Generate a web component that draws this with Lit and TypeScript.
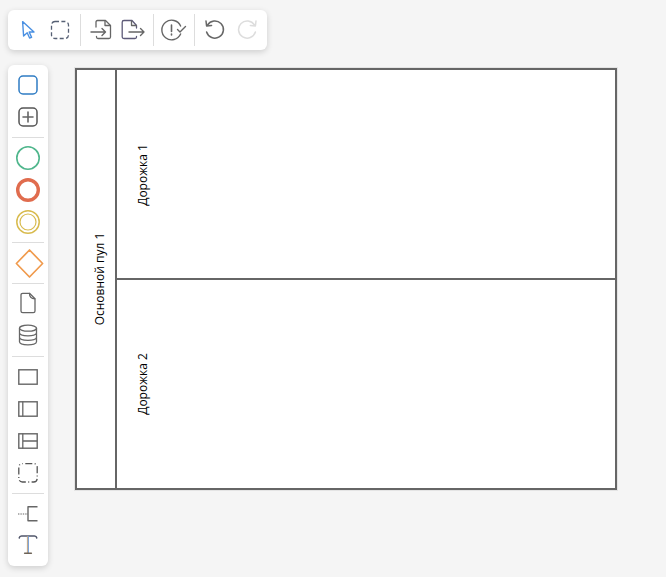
import { LitElement, html, css, svg, nothing } from "lit";
import { customElement } from "lit/decorators.js";

const G = "#666";
const icon = (c: unknown) => html`<div class="btn"><svg width="32" height="32" viewBox="0 0 32 32" fill="none" stroke="${G}" stroke-width="1.3" stroke-linecap="round" stroke-linejoin="round">${c}</svg></div>`;

const top1 = [
  svg`<path d="M10.6 7.6 L22 18 L17.2 18 L19.6 23.4 L17.6 24 L15.2 18.8 L11.6 22 Z" stroke="#4a90e2" stroke-width="1.4"/>`,
  svg`<rect x="7.5" y="7.5" width="17" height="17" rx="3.5" stroke="#566074" stroke-width="1.3" stroke-dasharray="4 2.4" stroke-linecap="butt"/>`,
];
const top2 = [
  svg`<path d="M11 13 V8 Q11 6.5 12.5 6.5 H20.5 L25.5 11.5 V23 Q25.5 24.5 24 24.5 H13 Q11.5 24.5 11.5 23 V22.5"/><path d="M20 6.8 V11.5 H25.2"/><path d="M6 18 H20.5 M17 14.5 L20.5 18 L17 21.5" stroke-width="1.4"/>`,
  svg`<path d="M19.5 14 V11.5 L15 6.5 H7 Q5.2 6.5 5.2 8.2 V23 Q5.2 24.5 7 24.5 H18 Q19.5 24.5 19.5 23 V22.5" stroke="#5d5a78"/><path d="M14.5 6.8 V11.5 H19.4"/><path d="M12 18 H27 M23.5 14.5 L27 18 L23.5 21.5" stroke-width="1.4"/>`,
];
const top3 = [
  svg`<path d="M22.6 12 A9.8 9.8 0 1 0 22.6 20" stroke-width="1.4"/><path d="M13.5 11 V17.5 M13.5 20 V21" stroke-width="1.6"/><path d="M19.5 15.5 L22 18 L27.5 12.5" stroke-width="1.4"/>`,
];
const top4 = [
  svg`<path d="M8.5 11 A8.6 8.6 0 1 1 7.6 18" stroke-width="1.5"/><path d="M7 7 L7.6 12 L12.6 11.4" stroke-width="1.5"/>`,
  svg`<path d="M23.5 11 A8.6 8.6 0 1 0 24.4 18" stroke="#ddd" stroke-width="1.5"/><path d="M25 7 L24.4 12 L19.4 11.4" stroke="#ddd" stroke-width="1.5"/>`,
];

const p1 = [
  svg`<rect x="7" y="7" width="18" height="18" rx="4" stroke="#2f7cc4" stroke-width="1.5"/>`,
  svg`<rect x="7" y="7" width="18" height="18" rx="4" stroke="#555" stroke-width="1.5"/><path d="M16 11 V21 M11 16 H21" stroke-width="1.6"/>`,
];
const p2 = [
  svg`<circle cx="16" cy="16" r="11.2" stroke="#4fb68c" stroke-width="1.6"/>`,
  svg`<circle cx="16" cy="16" r="10.3" stroke="#e06c4e" stroke-width="3.4"/>`,
  svg`<circle cx="16" cy="16" r="11.2" stroke="#d8bb4e" stroke-width="1.5"/><circle cx="16" cy="16" r="8" stroke="#d8bb4e" stroke-width="1.2"/>`,
];
const p3 = [
  svg`<path d="M17.5 3 L30.6 16.5 L17.5 30 L4.4 16.5 Z" stroke="#f09a4c" stroke-width="1.7"/>`,
];
const p4 = [
  svg`<path d="M9 7 Q9 5.3 10.7 5.3 H17.5 L23 10.8 V23 Q23 24.7 21.3 24.7 H10.7 Q9 24.7 9 23 Z"/><path d="M17.5 5.5 Q17.5 10.6 22.8 10.8" />`,
  svg`<ellipse cx="16" cy="8.2" rx="8.5" ry="3"/><path d="M7.5 8.2 V21.8 C7.5 25.8 24.5 25.8 24.5 21.8 V8.2 M7.5 12.8 C7.5 16.8 24.5 16.8 24.5 12.8 M7.5 17.3 C7.5 21.3 24.5 21.3 24.5 17.3"/>`,
];
const p5 = [
  svg`<rect x="6.8" y="8.8" width="18.4" height="14.4" stroke-width="1.4" stroke-linejoin="miter"/>`,
  svg`<rect x="6.8" y="8.8" width="18.4" height="14.4" stroke-width="1.4" stroke-linejoin="miter"/><path d="M10.8 9 V23"/>`,
  svg`<rect x="6.8" y="8.8" width="18.4" height="14.4" stroke-width="1.4" stroke-linejoin="miter"/><path d="M10.8 9 V23 M10.8 16 H25"/>`,
  svg`<rect x="6.8" y="6.6" width="18.4" height="18.4" rx="3.5" stroke="#555" stroke-width="1.3" stroke-dasharray="7 2.4 1 2.4" stroke-dashoffset="-3" stroke-linecap="butt"/>`,
];
const p6 = [
  svg`<path d="M25.5 8.8 H16 V22.8 H25.5" stroke-width="1.4" stroke-linecap="butt"/><path d="M6 16 H16" stroke-width="1.2" stroke-dasharray="1.4 1" stroke-linecap="butt"/>`,
  svg`<path d="M7.2 8 Q7.6 5.9 9.5 5.9 H22.5 Q24.4 5.9 24.8 8" stroke="#50566a" stroke-width="1.5"/><path d="M15.4 6 V23.2" stroke="#c7a57c" stroke-width="1" stroke-linecap="butt"/><path d="M16.4 6 V23.2" stroke="#6d9ad6" stroke-width="1" stroke-linecap="butt"/><path d="M12.6 23.3 H19.4" stroke="#6d6256" stroke-width="1.4"/>`,
];

const groups = (gs: unknown[][]) =>
  gs.map((g, i) => html`${i ? html`<div class="sep"></div>` : nothing}${g.map(icon)}`);

const labels = [
  { t: "Основной пул 1", x: 26, y: 212 },
  { t: "Дорожка 1", x: 69, y: 107.5 },
  { t: "Дорожка 2", x: 69, y: 316.5 },
];

@customElement("app-root")
export class AppRoot extends LitElement {
  static styles = css`
    :host { display: block; width: 666px; height: 577px; background: #f5f5f5; overflow: hidden; box-sizing: border-box; padding: 10px 8px 0; font-family: "Open Sans", sans-serif; }
    .bar { display: inline-flex; background: #fff; border-radius: 6px; box-shadow: 0 2px 6px rgba(0,0,0,.16); padding: 4px; }
    .top { vertical-align: top; }
    .top .sep { width: 1px; margin: 0 4px; background: #ddd; }
    .row { display: flex; margin-top: 15px; align-items: flex-start; }
    .side { flex-direction: column; width: 32px; }
    .side .sep { height: 1px; margin: 4px 0; background: #ddd; }
    .btn { width: 32px; height: 32px; flex: none; }
    .btn svg { display: block; overflow: visible; }
    .canvas { position: relative; width: 546px; height: 426px; margin: 2px 0 0 26px; }
    .canvas svg { display: block; }
    .lbl { position: absolute; font-size: 12px; line-height: 16px; color: #000; white-space: nowrap; writing-mode: sideways-lr; transform: translate(-50%, -50%); }
  `;
  render() {
    return html`
      <div class="bar top">${groups([top1, top2, top3, top4])}</div>
      <div class="row">
        <div class="bar side">${groups([p1, p2, p3, p4, p5, p6])}</div>
        <div class="canvas">
          <svg width="546" height="426" viewBox="74 67 546 426">
            <rect x="75" y="68" width="542" height="422" fill="none" stroke="#e4e4e4" stroke-width="2"/>
            <rect x="76" y="69" width="540" height="420" fill="#fff" stroke="${G}" stroke-width="2"/>
            <path d="M116 69 V489 M116 279 H616" stroke="${G}" stroke-width="2" fill="none"/>
          </svg>
          ${labels.map((l) => html`<div class="lbl" style="left:${l.x}px;top:${l.y}px">${l.t}</div>`)}
        </div>
      </div>
    `;
  }
}
